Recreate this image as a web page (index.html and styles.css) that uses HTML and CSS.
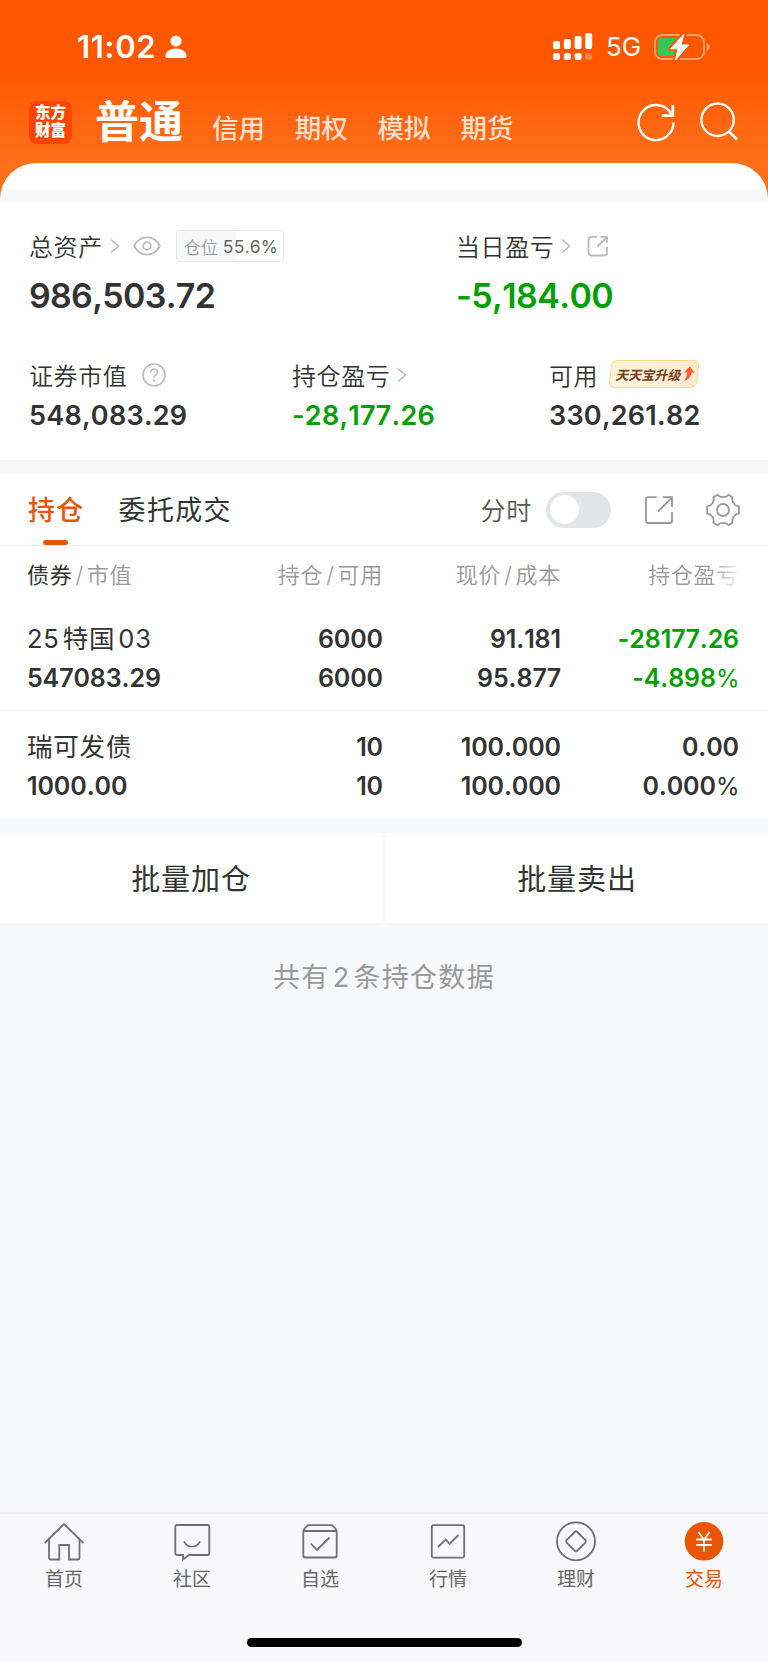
FILE: index.html
```html
<!DOCTYPE html>
<html lang="zh-CN">
<head>
  <meta charset="UTF-8" />
  <meta name="viewport" content="width=device-width, initial-scale=1.0"/>
  <title>交易 - 持仓</title>
  <link rel="stylesheet" href="styles.css">
</head>
<body>

  <!-- Header -->
  <header class="header">
    <div class="status-bar">
      <span class="time">11:02</span>
      <svg class="person" width="22" height="24" viewBox="0 0 22 24" fill="#fff">
        <circle cx="11" cy="6" r="5.6"/>
        <path d="M2 23 Q0.3 23 0.4 21 C0.8 16.5 5.5 13.6 11 13.6 S21.2 16.5 21.6 21 Q21.7 23 20 23 Z"/>
      </svg>
      <svg class="signal" width="40" height="28" viewBox="0 0 40 28" fill="#fff">
        <rect x="0" y="8" width="7" height="8" rx="2"/>
        <rect x="10.8" y="6" width="7" height="10" rx="2"/>
        <rect x="21.6" y="3" width="7" height="13" rx="2"/>
        <rect x="32.2" y="0" width="7" height="16" rx="2"/>
        <rect x="0" y="20" width="7" height="7" rx="2"/>
        <rect x="10.8" y="20" width="7" height="7" rx="2"/>
        <rect x="21.6" y="20" width="7" height="7" rx="2"/>
        <rect x="32.2" y="20" width="7" height="7" rx="2" opacity=".25"/>
      </svg>
      <span class="network">5G</span>
      <svg class="battery" width="57" height="30" viewBox="0 0 57 30">
        <rect x="1" y="3" width="49" height="24" rx="7" fill="none" stroke="#ffa274" stroke-width="1.8"/>
        <path d="M52.6 11 C56.6 12.5 56.6 17.5 52.6 19 Z" fill="#ffa274"/>
        <path d="M7 6 H23 V24 H7 Q3.8 24 3.8 20.5 V9.5 Q3.8 6 7 6 Z" fill="#34c759"/>
        <path d="M30 2 L16.5 16.8 H24 L21.5 28 L34.5 13 H27 Z" fill="#fff" stroke="#ff5900" stroke-width="5" stroke-linejoin="round"/>
        <path d="M30 2 L16.5 16.8 H24 L21.5 28 L34.5 13 H27 Z" fill="#fff" stroke="#fff" stroke-width="1" stroke-linejoin="round"/>
      </svg>
    </div>

    <div class="nav-bar">
      <div class="logo">东方<br>财富</div>
      <h1>普通</h1>
      <nav class="nav-links">
        <a>信用</a>
        <a>期权</a>
        <a>模拟</a>
        <a>期货</a>
      </nav>
      <svg class="nav-icon" width="40" height="40" viewBox="0 0 40 40" fill="none" stroke="#fff" stroke-width="2.4">
        <path d="M37.5 20.5 A17.5 17.5 0 1 1 33.8 9.8 L36 13"/>
        <path d="M36.8 3 V13.6 H25.8" stroke-width="2.8"/>
      </svg>
      <svg class="nav-icon search-icon" width="40" height="40" viewBox="0 0 40 40" fill="none" stroke="#fff" stroke-width="2.4">
        <circle cx="18.6" cy="17.8" r="16.2"/>
        <path d="M30 29.5 L38 37.5" stroke-width="2.8"/>
      </svg>
    </div>
    <div class="sheet-top"></div>
  </header>

  <!-- Assets -->
  <section class="assets">
    <div class="asset-row asset-row-main">
      <div>
        <div class="label">总资产
          <svg class="chevron" width="10" height="16" viewBox="0 0 10 16"><path d="M1 1.5 L8.5 8 L1 14.5"/></svg>
          <svg class="eye" width="28" height="20" viewBox="0 0 28 20" fill="none" stroke="#bbb" stroke-width="1.8">
            <path d="M1.2 10 C7 -1.4 21 -1.4 26.8 10 C21 21.4 7 21.4 1.2 10 Z"/>
            <circle cx="14" cy="10" r="3.8"/>
          </svg>
          <span class="position"><em>仓位</em>55.6%</span>
        </div>
        <div class="amount-lg total-assets">986,503.72</div>
      </div>
      <div>
        <div class="label">当日盈亏
          <svg class="chevron" width="10" height="16" viewBox="0 0 10 16"><path d="M1 1.5 L8.5 8 L1 14.5"/></svg>
          <svg class="share-sm" width="22" height="22" viewBox="0 0 22 22" fill="none" stroke="#bbb" stroke-width="1.8">
            <path d="M10 1.8 H4.5 Q1.5 1.8 1.5 4.8 V17.5 Q1.5 20.5 4.5 20.5 H17 Q20 20.5 20 17.5 V12"/>
            <path d="M10.5 11.5 L20 2 M13.5 1.8 H20 V8"/>
          </svg>
        </div>
        <div class="amount-lg green">-5,184.00</div>
      </div>
    </div>

    <div class="asset-row asset-row-sub">
      <div>
        <div class="label">证券市值
          <svg class="help" width="24" height="24" viewBox="0 0 24 24" fill="none" stroke="#bbb" stroke-width="1.6">
            <circle cx="12" cy="12" r="11"/>
            <path d="M8.8 9.5 C8.8 4.8 15.4 5 15.4 9 C15.4 11.6 12 11.8 12 14.8"/>
            <path d="M12 16.6 V18.4" stroke-width="2"/>
          </svg>
        </div>
        <div class="amount">548,083.29</div>
      </div>
      <div>
        <div class="label">持仓盈亏
          <svg class="chevron" width="10" height="16" viewBox="0 0 10 16"><path d="M1 1.5 L8.5 8 L1 14.5"/></svg>
        </div>
        <div class="amount green">-28,177.26</div>
      </div>
      <div>
        <div class="label">可用
          <span class="promo">
            <span>天天宝升级</span>
            <svg width="12" height="16" viewBox="0 0 12 16"><path d="M6.8 0.5 L11.7 7 L8.5 6.5 C8.3 10.5 5.5 13.8 0.8 15.2 C3.3 12 4.1 9.5 4.2 6.2 L1 6.5 Z" fill="#fd5b34"/></svg>
          </span>
        </div>
        <div class="amount">330,261.82</div>
      </div>
    </div>
  </section>

  <!-- Holdings -->
  <section class="holdings">
    <div class="tabs">
      <div class="tab active">持仓</div>
      <div class="tab">委托成交</div>
      <div class="tab-tools">
        <span class="minute">分时</span>
        <span class="switch"></span>
        <svg class="share" width="28" height="28" viewBox="0 0 28 28" fill="none" stroke="#999" stroke-width="1.8">
          <path d="M11.5 1.2 H3 Q1 1.2 1 3.2 V25 Q1 27 3 27 H25 Q27 27 27 25 V16"/>
          <path d="M13 15.5 L26.5 2 M18 1.2 H27 V11"/>
        </svg>
        <svg class="gear" width="34" height="34" viewBox="0 0 34 34" fill="none" stroke="#999" stroke-width="1.8" stroke-linejoin="round">
          <path d="M11.5 1.8 C14 4.8 20 4.8 22.5 1.8 L26.5 4.3 C25.5 8.5 28.2 12.8 32.8 13.3 V20.7 C28.2 21.2 25.5 25.5 26.5 29.7 L22.5 32.2 C20 29.2 14 29.2 11.5 32.2 L7.5 29.7 C8.5 25.5 5.8 21.2 1.2 20.7 V13.3 C5.8 12.8 8.5 8.5 7.5 4.3 Z"/>
          <circle cx="17" cy="17" r="6"/>
        </svg>
      </div>
    </div>

    <div class="grid table-head">
      <span><b>债券</b><i>/</i>市值</span>
      <span>持仓<i>/</i>可用</span>
      <span>现价<i>/</i>成本</span>
      <span class="fade">持仓盈亏</span>
    </div>

    <div class="grid row">
      <span class="name">25<u>特国</u>03</span>
      <span>6000</span>
      <span>91.181</span>
      <span class="green">-28177.26</span>
      <span>547083.29</span>
      <span>6000</span>
      <span>95.877</span>
      <span class="green">-4.898<small>%</small></span>
    </div>
    <div class="grid row">
      <span class="name">瑞可发债</span>
      <span>10</span>
      <span>100.000</span>
      <span>0.00</span>
      <span>1000.00</span>
      <span>10</span>
      <span>100.000</span>
      <span>0.000<small>%</small></span>
    </div>
  </section>

  <div class="actions">
    <button>批量加仓</button>
    <button>批量卖出</button>
  </div>

  <p class="total">共有<span>2</span>条持仓数据</p>

  <!-- Bottom Bar -->
  <footer class="bottom-bar">
    <div class="menu">
      <a>
        <svg width="40" height="40" viewBox="0 0 40 40">
          <path d="M0.7 22 L20 3 L39.5 22"/>
          <path d="M5 18.5 V37 Q5 38.5 6.5 38.5 H15.3 V24 H25 V38.5 H34 Q35.5 38.5 35.5 37 V18.5"/>
        </svg>
        首页
      </a>
      <a>
        <svg width="40" height="40" viewBox="0 0 40 40">
          <path d="M5 4 H35.5 Q37.3 4 37.3 6 V32 Q37.3 34 35.5 34 H17 L11 38.5 V34 H5 Q3.3 34 3.3 32 V6 Q3.3 4 5 4 Z"/>
          <path d="M12 20.5 C15 27.2 25 27.2 28 20.5"/>
        </svg>
        社区
      </a>
      <a>
        <svg width="40" height="40" viewBox="0 0 40 40">
          <path d="M3.3 11 Q3.3 9.5 4.3 8 L7 4.8 Q7.6 4.2 8.5 4.2 H31.5 Q32.4 4.2 33 4.8 L35.7 8 Q36.7 9.5 36.7 11 V34.5 Q36.7 36.5 34.7 36.5 H5.3 Q3.3 36.5 3.3 34.5 Z M4 10 H36"/>
          <path d="M10.8 22.5 L17 29 L29.5 16.5"/>
        </svg>
        自选
      </a>
      <a>
        <svg width="40" height="40" viewBox="0 0 40 40">
          <rect x="3.8" y="4.2" width="32.4" height="32.4" rx="1.5"/>
          <path d="M10 26 L17.8 18.5 L21.5 23 L30.5 14"/>
        </svg>
        行情
      </a>
      <a>
        <svg width="40" height="40" viewBox="0 0 40 40">
          <circle cx="20" cy="20.3" r="19"/>
          <rect x="12.5" y="12.8" width="15" height="15" rx="1.5" transform="rotate(45 20 20.3)"/>
        </svg>
        理财
      </a>
      <a class="current">
        <svg width="40" height="40" viewBox="0 0 40 40">
          <circle class="coin" cx="20" cy="20.3" r="19.3"/>
          <path class="yen" d="M14.5 11 L20 19 L25.5 11 M12.3 18.5 H27.7 M12.3 24 H27.7 M20 18 V30.5"/>
        </svg>
        交易
      </a>
    </div>
    <div class="home-indicator"></div>
  </footer>

</body>
</html>
```
FILE: styles.css
```css
* {
  box-sizing: border-box;
  margin: 0;
  padding: 0;
}

body {
  font-family: Inter, "Noto Sans CJK SC", sans-serif;
  font-kerning: none;
  background: #f7f8fa;
  color: #333;
  min-height: 1662px;
  display: flex;
  flex-direction: column;
}

svg {
  flex: none;
}

/* Header */
.header {
  height: 203px;
  background: linear-gradient(#ff5700 0, #ff5700 66px, #ff6e18 155px, #ff6e18 100%);
  color: #fff;
}

.status-bar {
  display: flex;
  align-items: center;
  height: 93px;
  padding-left: 77px;
}

.time {
  width: 88px;
  font-size: 31px;
  font-weight: 600;
  letter-spacing: 0.7px;
}

.signal {
  margin-left: 366px;
}

.network {
  width: 48px;
  margin-left: 13px;
  font-size: 26px;
}

.nav-bar {
  display: flex;
  align-items: center;
  height: 58px;
  padding-left: 29px;
}

.logo {
  width: 43px;
  height: 43px;
  padding-top: 3px;
  border-radius: 8px;
  background: #ff4500;
  font-size: 15.5px;
  line-height: 18px;
  font-weight: 900;
  text-align: center;
}

.nav-bar h1 {
  width: 117px;
  margin-left: 23px;
  font-size: 44px;
  line-height: 58px;
  font-weight: 600;
}

.nav-links {
  display: flex;
  gap: 29.8px;
  width: 424px;
  padding-top: 12px;
}

.nav-links a {
  font-size: 26.5px;
  line-height: 30px;
  font-weight: 500;
  color: #ffdfcf;
}

.search-icon {
  margin-left: 23px;
}

.sheet-top {
  height: 40px;
  margin-top: 12px;
  border-radius: 36px 36px 0 0;
  background: linear-gradient(#fff 26px, #f7f8fa 26px);
}

/* Assets */
.assets {
  height: 257px;
  padding: 23px 0 0 29px;
  background: #fff;
}

.asset-row {
  display: grid;
}

.asset-row-main {
  grid-template-columns: 427px 1fr;
}

.asset-row-sub {
  grid-template-columns: 263px 257px 1fr;
  margin-top: 30px;
}

.label {
  display: flex;
  align-items: center;
  height: 40px;
  padding-bottom: 2px;
  font-size: 24px;
  letter-spacing: 0.6px;
  font-weight: 350;
}

.label > svg,
.label .position {
  margin-top: 2px;
}

.chevron {
  margin-left: 7px;
  fill: none;
  stroke: #bbb;
  stroke-width: 1.6;
}

.eye {
  margin-left: 13px;
}

.position {
  display: flex;
  align-items: center;
  width: 108px;
  height: 32px;
  margin-left: 15px;
  padding-left: 7px;
  border: 1px solid #e6e8ec;
  border-radius: 4px;
  background: linear-gradient(90deg, #f7f8fa 55.6%, #fff 55.6%);
  font-size: 17.5px;
  font-weight: 400;
  letter-spacing: 0.2px;
  color: #666;
}

.position em {
  margin-right: 5px;
  font-style: normal;
  font-size: 17px;
  font-weight: 350;
  letter-spacing: 0;
  color: #999;
}

.share-sm {
  margin-left: 16px;
}

.help {
  margin-left: 15px;
}

.promo {
  position: relative;
  display: flex;
  align-items: center;
  width: 88px;
  height: 28px;
  margin-left: 12px;
  padding-left: 5px;
  gap: 3px;
  font-size: 13px;
  font-weight: 700;
  font-style: italic;
  letter-spacing: 0;
  color: #74421f;
  z-index: 0;
}

.promo::before {
  content: "";
  position: absolute;
  inset: 0;
  z-index: -1;
  border: 1.5px solid #ffd886;
  border-radius: 6px;
  background: linear-gradient(90deg, #fff3dc, #fdebd0);
  transform: skewX(-7deg);
}

.amount-lg {
  font-size: 34px;
  line-height: 59px;
  font-weight: 600;
  letter-spacing: -0.6px;
}

.total-assets {
  letter-spacing: -0.7px;
}

.amount {
  font-size: 27px;
  line-height: 41px;
  font-weight: 600;
  letter-spacing: 0.25px;
}

.green {
  color: #00a000;
}

/* Holdings */
.holdings {
  margin-top: 14px;
  background: #fff;
}

.tabs {
  display: flex;
  height: 72px;
  padding-left: 28px;
  border-bottom: 1px solid #f0f1f3;
}

.tab {
  position: relative;
  height: 71px;
  margin-right: 34px;
  font-size: 27px;
  line-height: 74px;
  letter-spacing: 1.3px;
}

.tab.active {
  font-weight: 500;
  color: #ea5504;
}

.tab.active::after {
  content: "";
  position: absolute;
  left: 15px;
  bottom: 0;
  width: 25px;
  height: 5px;
  border-radius: 2.5px;
  background: #ea5504;
}

.tab-tools {
  display: flex;
  align-items: center;
  margin-left: auto;
  padding-right: 28px;
}

.minute {
  padding-bottom: 2px;
  font-size: 25px;
  letter-spacing: 0.7px;
  font-weight: 350;
  color: #555;
}

.switch {
  width: 65px;
  height: 36px;
  margin-left: 14px;
  padding: 3.5px;
  border-radius: 18px;
  background: #e4e5e7;
}

.switch::before {
  content: "";
  display: block;
  width: 29px;
  height: 29px;
  border-radius: 50%;
  background: #fff;
}

.share {
  margin-left: 34px;
}

.gear {
  margin-left: 33px;
}

.grid {
  display: grid;
  grid-template-columns: 200px 156px 178px 178px;
  padding-left: 27px;
  text-align: right;
}

.grid > span:nth-child(4n + 1) {
  text-align: left;
}

.table-head {
  font-size: 22px;
  line-height: 58px;
  height: 59px;
  letter-spacing: 0.7px;
  font-weight: 350;
  color: #999;
}

.table-head b {
  font-weight: 400;
  color: #333;
}

.table-head i {
  margin: 0 3px;
  font-style: normal;
}

.fade {
  -webkit-mask-image: linear-gradient(90deg, #000 150px, transparent 180px);
  mask-image: linear-gradient(90deg, #000 150px, transparent 180px);
}

.row {
  padding-top: 15px;
  padding-bottom: 12px;
  border-bottom: 1px solid #f0f1f3;
  font-size: 25px;
  line-height: 39px;
  font-weight: 600;
  letter-spacing: -0.1px;
}

.row:last-child {
  padding-top: 17px;
  border-bottom: none;
}

.row .name {
  font-size: 25.5px;
  line-height: 37px;
  font-weight: 375;
  letter-spacing: 0.8px;
}

.row small {
  font-size: 24px;
  font-weight: 400;
  letter-spacing: -0.5px;
}

.name u {
  margin: 0 3px;
  text-decoration: none;
}

/* Batch buttons */
.actions {
  display: flex;
  gap: 4px;
  margin-top: 15px;
}

.actions button {
  flex: 1;
  height: 90px;
  padding-bottom: 2px;
  border: none;
  background: #fff;
  font: inherit;
  font-size: 29px;
  letter-spacing: 0.9px;
  color: #333;
}

.total {
  margin-top: 35px;
  text-align: center;
  font-size: 27px;
  line-height: 40px;
  letter-spacing: 1.3px;
  font-weight: 375;
  color: #999;
}

.total span {
  margin: 0 3px;
}

/* Bottom Bar */
.bottom-bar {
  height: 150px;
  margin-top: auto;
  border-top: 2px solid #ebecee;
  background: #f8f8fb;
}

.menu {
  display: grid;
  grid-template-columns: repeat(6, 1fr);
  padding-top: 7px;
}

.menu a {
  display: flex;
  flex-direction: column;
  align-items: center;
  font-size: 19px;
  line-height: 38px;
  font-weight: 375;
  color: #666;
}

.menu svg {
  fill: none;
  stroke: #707070;
  stroke-width: 1.8;
}

.menu .current {
  color: #ea5504;
}

.menu .coin {
  fill: #ea5504;
  stroke: none;
}

.menu .yen {
  stroke: #fff;
}

.home-indicator {
  width: 275px;
  height: 9px;
  margin: 39px auto 0;
  border-radius: 5px;
  background: #000;
}
```
